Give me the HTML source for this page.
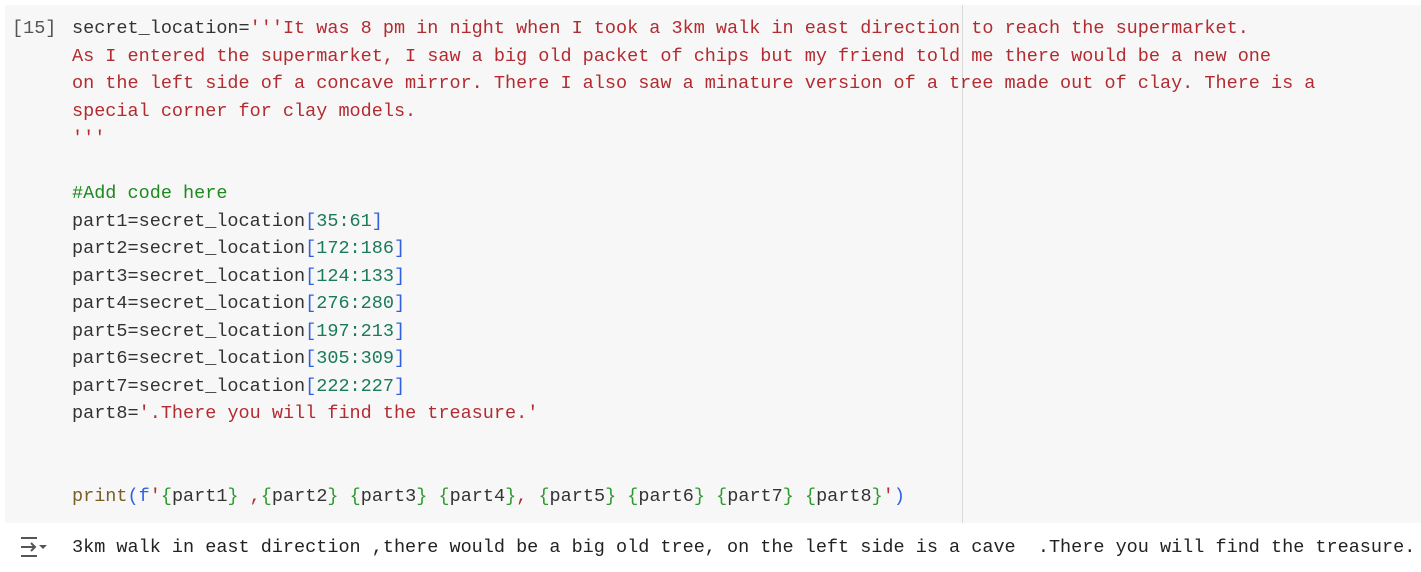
<!DOCTYPE html>
<html><head><meta charset="utf-8"><style>
html,body{margin:0;padding:0;background:#fff;width:1421px;height:572px;overflow:hidden}
body{font-family:"Liberation Mono","DejaVu Sans Mono",monospace;font-size:18.5px;color:#333}
.cell{position:absolute;left:5px;top:5px;width:1416px;height:518px;background:#f7f7f7}
.ruler{position:absolute;left:962px;top:5px;width:1px;height:518px;background:#d8d8d8}
.num{position:absolute;left:12px;top:15px;line-height:27.5px;color:#555}
pre{position:absolute;left:72px;top:15px;margin:0;font:inherit;line-height:27.5px;white-space:pre;color:#333}
.s{color:#b22b31}.c{color:#1d8a1d}.n{color:#1a7a5a}.b{color:#3060e0}.f{color:#795e26}.g{color:#2c9a2c}
.out{position:absolute;left:72px;top:534px;line-height:27.5px;white-space:pre;color:#222}
</style></head><body>
<div class="cell"></div><div class="ruler"></div>
<div class="num">[15]</div>
<pre>secret_location=<span class="s">'''It was 8 pm in night when I took a 3km walk in east direction to reach the supermarket.
As I entered the supermarket, I saw a big old packet of chips but my friend told me there would be a new one
on the left side of a concave mirror. There I also saw a minature version of a tree made out of clay. There is a
special corner for clay models.
'''</span>

<span class="c">#Add code here</span>
part1=secret_location<span class="b">[</span><span class="n">35:61</span><span class="b">]</span>
part2=secret_location<span class="b">[</span><span class="n">172:186</span><span class="b">]</span>
part3=secret_location<span class="b">[</span><span class="n">124:133</span><span class="b">]</span>
part4=secret_location<span class="b">[</span><span class="n">276:280</span><span class="b">]</span>
part5=secret_location<span class="b">[</span><span class="n">197:213</span><span class="b">]</span>
part6=secret_location<span class="b">[</span><span class="n">305:309</span><span class="b">]</span>
part7=secret_location<span class="b">[</span><span class="n">222:227</span><span class="b">]</span>
part8=<span class="s">'.There you will find the treasure.'</span>


<span class="f">print</span><span class="b">(f</span><span class="s">'</span><span class="g">{</span>part1<span class="g">}</span><span class="s"> ,</span><span class="g">{</span>part2<span class="g">}</span> <span class="g">{</span>part3<span class="g">}</span> <span class="g">{</span>part4<span class="g">}</span><span class="s">, </span><span class="g">{</span>part5<span class="g">}</span> <span class="g">{</span>part6<span class="g">}</span> <span class="g">{</span>part7<span class="g">}</span> <span class="g">{</span>part8<span class="g">}</span><span class="s">'</span><span class="b">)</span></pre>
<svg style="position:absolute;left:19px;top:536px" width="30" height="22" viewBox="0 0 30 22" fill="none" stroke="#555" stroke-width="2">
<path d="M2 2h16M2 20h16M2 11h14M12 7l4 4-4 4"/><path d="M20 9h8l-4 4z" fill="#555" stroke="none"/>
</svg>
<div class="out">3km walk in east direction ,there would be a big old tree, on the left side is a cave  .There you will find the treasure.</div>
</body></html>
